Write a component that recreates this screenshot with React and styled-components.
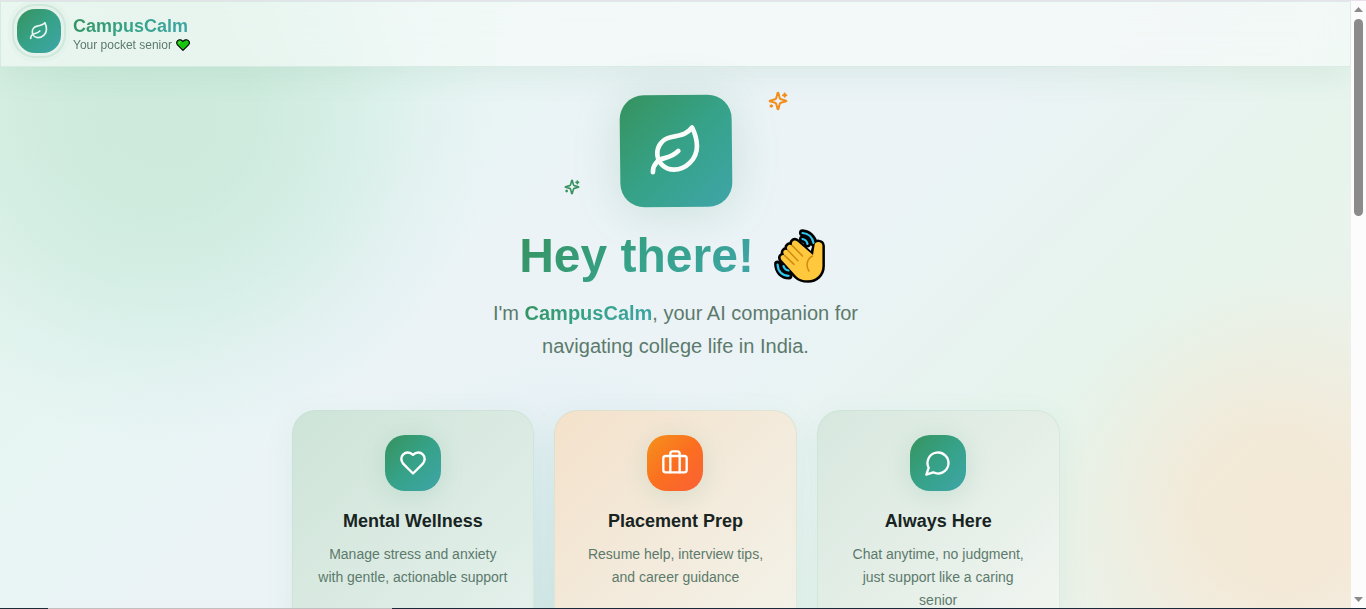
import styled, { createGlobalStyle } from "styled-components";
import { Leaf } from "lucide-react";

const cards = [
  {
    title: "Mental Wellness",
    text: "Manage stress and anxiety with gentle, actionable support",
    icon: "heart",
    tone: "green",
  },
  {
    title: "Placement Prep",
    text: "Resume help, interview tips, and career guidance",
    icon: "case",
    tone: "orange",
  },
  {
    title: "Always Here",
    text: "Chat anytime, no judgment, just support like a caring senior",
    icon: "chat",
    tone: "mint",
  },
];

const iconPaths = {
  heart: ["M19 14c1.49-1.46 3-3.21 3-5.5A5.5 5.5 0 0 0 16.5 3c-1.76 0-3 .5-4.5 2-1.5-1.5-2.74-2-4.5-2A5.5 5.5 0 0 0 2 8.5c0 2.3 1.5 4.05 3 5.5l7 7Z"],
  case: ["M16 20V4a2 2 0 0 0-2-2h-4a2 2 0 0 0-2 2v16", "M4 6h16a2 2 0 0 1 2 2v10a2 2 0 0 1-2 2H4a2 2 0 0 1-2-2V8a2 2 0 0 1 2-2Z"],
  chat: ["M7.9 20A9 9 0 1 0 4 16.1L2 22Z"],
  sparkles: [
    "M9.937 15.5A2 2 0 0 0 8.5 14.063l-6.135-1.582a.5.5 0 0 1 0-.962L8.5 9.936A2 2 0 0 0 9.937 8.5l1.582-6.135a.5.5 0 0 1 .963 0L14.063 8.5A2 2 0 0 0 15.5 9.937l6.135 1.581a.5.5 0 0 1 0 .964L15.5 14.063a2 2 0 0 0-1.437 1.437l-1.582 6.135a.5.5 0 0 1-.963 0z",
    "M20 3v4",
    "M22 5h-4",
    "M4 17v2",
    "M5 18H3",
  ],
};

const Icon = ({ name, size, stroke = 2 }) => (
  <svg width={size} height={size} viewBox="0 0 24 24" fill="none" stroke="currentColor" strokeWidth={stroke} strokeLinecap="round" strokeLinejoin="round" aria-hidden="true">
    {iconPaths[name].map((d) => <path key={d} d={d} />)}
  </svg>
);

const GreenHeart = () => (
  <svg width="14" height="12" viewBox="0 0 15 13" role="img" aria-label="green heart">
    <path
      d="M7.500 12.300 1.500 6.300C.3 5 .4 2.900 1.700 1.700 3.200.4 6 .6 7.500 2.700 9 .6 11.800.4 13.300 1.700c1.300 1.200 1.400 3.300.2 4.600Z"
      fill="#16c60c"
      stroke="#000"
      strokeWidth="1.200"
      strokeLinejoin="round"
    />
    <path d="M3.200 4.700c0-1 .5-1.600 1.300-1.800" fill="none" stroke="#8cf08a" strokeLinecap="round" />
  </svg>
);

const WavingHand = () => (
  <svg width="58" height="54" viewBox="0 0 58 54" role="img" aria-label="waving hand">
    <g fill="none" strokeLinecap="round">
      <g stroke="#000" strokeWidth="7">
        <path d="M28.500 3.800c6 .4 10.500 4.600 11.600 10.500" />
        <path d="M28.500 10c2.600.5 4.500 2.300 5 5" />
        <path d="M3.600 35c.2 7.400 4.800 11.800 11.400 12" />
        <path d="M10 37c.6 2.600 2.200 4 5 4.500" />
      </g>
    </g>
    <path
      d="M22 47 7.500 31c-2.400-3 .5-6 3-4.600-3-3.700.2-7 3.300-5.100-2.500-3.800 1.200-7.200 4.300-4.900C17 12 20.500 10 23.400 12.600L38 26.500 41 16.500c0-4.600 7.400-4.500 7.400.300V37c0 8.500-6.500 14.300-14.300 14.300-4.600 0-8.600-.7-12.100-4.300Z"
      fill="#000"
      stroke="#000"
      strokeWidth="5"
      strokeLinejoin="round"
    />
    <g fill="none" stroke="#30c8f0" strokeWidth="2.200" strokeLinecap="round">
      <path d="M28.500 4c6 .4 10 4.600 11 10" />
      <path d="M28.500 10c2.600.5 4.500 2.300 5 5" />
      <path d="M3.600 35.500c.2 7 4.800 11.300 11 11.300" />
      <path d="M9.500 37c.6 2.600 2.200 4 5 4.500" />
    </g>
    <path
      d="M22 47 7.500 31c-2.400-3 .5-6 3-4.600-3-3.700.2-7 3.300-5.100-2.500-3.800 1.200-7.200 4.300-4.900C17 12 20.500 10 23.400 12.600L39 26 40.500 16.500c0-4.600 7.900-4.500 7.900.300V37c0 8.500-6.500 14.300-14.300 14.300-4.600 0-8.600-.7-12.100-4.300Z"
      fill="#ffc83d"
    />
    <path d="m10.500 26.400 9.500 9M13.800 21.300 24 31.800M18.100 16.400 28.500 27M38.500 27c-6 3-6.700 10-3.600 15" fill="none" stroke="#d08a12" strokeWidth="1.500" strokeLinecap="round" />
  </svg>
);

const ScrollBar = () => (
  <Track aria-hidden="true">
    <svg width="9" height="5" viewBox="0 0 9 5"><path d="M4.500 0 9 5H0Z" fill="#8b8b8b" /></svg>
    <Rail><Thumb /></Rail>
    <svg width="9" height="5" viewBox="0 0 9 5"><path d="M4.500 5 0 0h9Z" fill="#8b8b8b" /></svg>
  </Track>
);

const Header = () => (
  <TopBar>
    <Logo>
      <Leaf size={20} />
    </Logo>
    <BrandBlock>
      <Brand><GradientText>CampusCalm</GradientText></Brand>
      <Tagline>
        Your pocket senior <GreenHeart />
      </Tagline>
    </BrandBlock>
  </TopBar>
);

const Hero = () => (
  <HeroSection>
    <HeroMark>
      <HeroTile>
        <Leaf size={56} />
      </HeroTile>
      <Spark $top="-4px" $right="-56px" $color="#f28c1b"><Icon name="sparkles" size={20} stroke={2.4} /></Spark>
      <Spark $top="84px" $right="152px" $color="#38925f"><Icon name="sparkles" size={16} stroke={2.4} /></Spark>
    </HeroMark>
    <Title>
      <GradientText>Hey there!</GradientText>
      <WavingHand />
    </Title>
    <Intro>
      I'm <GradientText as="strong">CampusCalm</GradientText>, your AI companion for navigating college life in India.
    </Intro>
  </HeroSection>
);

const App = () => {
  return (
    <Screen>
      <GlobalStyle />
      <TopEdge />
      <Body>
        <Page>
          <Header />
          <main>
            <Hero />
            <CardGrid>
              {cards.map((card) => (
                <Card key={card.title} $tone={card.tone}>
                  <CardTile $tone={card.tone}>
                    <Icon name={card.icon} size={28} />
                  </CardTile>
                  <CardTitle>{card.title}</CardTitle>
                  <CardText>{card.text}</CardText>
                </Card>
              ))}
            </CardGrid>
          </main>
        </Page>
        <ScrollBar />
      </Body>
      <BottomEdge />
    </Screen>
  );
};

const tones = {
  green: "linear-gradient(135deg, #cee4d8 0%, #daeae2 50%, #e5f1ed 100%)",
  orange: "linear-gradient(135deg, #f4e1ca 0%, #f3eadb 50%, #f3f3ea 100%)",
  mint: "linear-gradient(135deg, #d7e8df 0%, #e4eee7 50%, #f3f6f2 100%)",
};

const greenGradient = "linear-gradient(135deg, #36925d 0%, #36a288 50%, #3fa5a8 100%)";
const orangeGradient = "linear-gradient(135deg, #f5921b 0%, #fb6f20 50%, #fa6035 100%)";

const GlobalStyle = createGlobalStyle`
  * {
    box-sizing: border-box;
  }
  body {
    margin: 0;
    font-family: "Liberation Sans", Arial, sans-serif;
    color: #18241f;
    overflow: hidden;
  }
`;

const Screen = styled.div`
  display: flex;
  flex-direction: column;
  height: 100vh;
`;

const TopEdge = styled.div`
  flex: none;
  height: 1px;
  background: #e8e0ec;
`;

const BottomEdge = styled.div`
  flex: none;
  height: 1px;
  background: linear-gradient(90deg, #1b2e38 48px, #c0c0c0 48px 392px, #1b2a38 392px);
`;

const Body = styled.div`
  display: flex;
  flex: 1;
  min-height: 0;
`;

const Page = styled.div`
  flex: 1;
  min-width: 0;
  overflow: hidden;
  background:
    radial-gradient(circle at 165px 115px, rgba(186, 226, 206, 0.56) 0, rgba(186, 226, 206, 0.54) 90px, rgba(188, 228, 212, 0.38) 180px, rgba(192, 230, 218, 0.14) 260px, transparent 330px),
    radial-gradient(circle at calc(100% - 75px) 510px, rgba(250, 224, 196, 0.55) 0, rgba(250, 225, 198, 0.5) 80px, rgba(246, 228, 202, 0.26) 160px, transparent 240px),
    radial-gradient(circle at 560px 620px, rgba(195, 225, 224, 0.55) 0, rgba(200, 227, 228, 0.42) 120px, rgba(215, 232, 240, 0.16) 220px, transparent 280px),
    linear-gradient(135deg, #e4f5ea 0%, #e7f5f3 25%, #ebf3f6 38%, #ebf3f6 55%, #e6f4ec 75%, #f0f1ea 100%);
`;

const TopBar = styled.header`
  display: flex;
  align-items: center;
  gap: 12px;
  height: 66px;
  padding: 0 16px 6px;
  border: 1px solid rgba(200, 228, 214, 0.6);
  background: rgba(249, 251, 250, 0.6);
  backdrop-filter: blur(20px);
  box-shadow: 0 8px 32px rgba(54, 146, 93, 0.09);
`;

const Logo = styled.div`
  display: flex;
  align-items: center;
  justify-content: center;
  width: 44px;
  height: 44px;
  border-radius: 18px;
  color: #eaf7f1;
  background: ${greenGradient};
  box-shadow: 0 0 0 3px #e4f2eb, 0 0 0 5px #d0e7dc, 0 0 0 9px rgba(214, 234, 224, 0.3);
`;

const GradientText = styled.span`
  background: ${greenGradient};
  background-clip: text;
  -webkit-background-clip: text;
  color: transparent;
`;

const BrandBlock = styled.div`
  padding-top: 6px;
`;

const Brand = styled.div`
  font-size: 18px;
  font-weight: bold;
  line-height: 22px;
`;

const Tagline = styled.div`
  display: flex;
  align-items: center;
  gap: 4px;
  font-size: 12px;
  line-height: 16px;
  color: #5c7a6c;
`;

const HeroSection = styled.section`
  display: flex;
  flex-direction: column;
  align-items: center;
  padding-top: 28px;
  text-align: center;
`;

const HeroMark = styled.div`
  position: relative;
  margin-bottom: 24px;
`;

const HeroTile = styled.div`
  display: flex;
  align-items: center;
  justify-content: center;
  width: 112px;
  height: 112px;
  border-radius: 24px;
  color: #fafcfa;
  background: ${greenGradient};
  box-shadow: 0 4px 48px rgba(54, 146, 93, 0.18);
  transform: rotate(-0.6deg);
`;

const Spark = styled.span`
  position: absolute;
  display: flex;
  top: ${(props) => props.$top};
  right: ${(props) => props.$right};
  color: ${(props) => props.$color};
`;

const Title = styled.h1`
  display: flex;
  align-items: center;
  gap: 20px;
  height: 50px;
  margin: 0 0 16px;
  font-size: 48px;
  line-height: 58px;
`;

const Intro = styled.p`
  max-width: 448px;
  margin: 0;
  font-size: 20px;
  line-height: 33px;
  color: #5c7a6c;
`;

const CardGrid = styled.section`
  display: grid;
  grid-template-columns: repeat(3, 1fr);
  gap: 20px;
  max-width: 768px;
  margin: 47px auto 0;
`;

const Card = styled.article`
  display: flex;
  flex-direction: column;
  align-items: center;
  padding: 24px;
  border: 1px solid rgba(190, 222, 204, 0.4);
  border-radius: 24px;
  text-align: center;
  background: ${(props) => tones[props.$tone]};
  background-origin: border-box;
  box-shadow: 0 8px 32px rgba(54, 146, 110, 0.07);
`;

const CardTile = styled.div`
  display: flex;
  align-items: center;
  justify-content: center;
  width: 56px;
  height: 56px;
  margin-bottom: 16px;
  border-radius: 20px;
  color: #fff;
  background: ${(props) => (props.$tone === "orange" ? orangeGradient : greenGradient)};
  box-shadow: 0 4px 24px rgba(54, 146, 110, 0.15);
`;

const CardTitle = styled.h2`
  margin: 0 0 8px;
  font-size: 18px;
  line-height: 28px;
`;

const CardText = styled.p`
  margin: 0;
  font-size: 14px;
  line-height: 23px;
  color: #5c7a6c;
`;

const Track = styled.div`
  display: flex;
  flex-direction: column;
  align-items: center;
  flex: none;
  width: 15px;
  padding: 6px 0;
  background: #fcfcfc;
`;

const Rail = styled.div`
  flex: 1;
  padding-top: 7px;
`;

const Thumb = styled.div`
  width: 9px;
  height: 34%;
  border-radius: 5px;
  background: #8b8b8b;
`;

export default App;
